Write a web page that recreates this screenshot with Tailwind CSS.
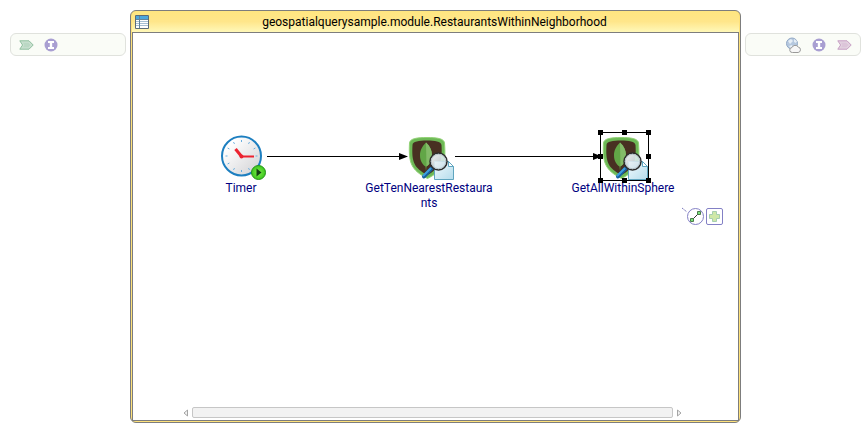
<!DOCTYPE html>
<html lang="en">
<head>
    <meta charset="UTF-8">
    <meta name="viewport" content="width=device-width, initial-scale=1.0">
    <title>RestaurantsWithinNeighborhood</title>
    <script src="https://cdn.jsdelivr.net/npm/@tailwindcss/browser@4"></script>
</head>
<body class="bg-white font-['Roboto','Open_Sans',sans-serif] text-xs text-black">
    <!-- Shared icons -->
    <svg class="absolute h-0 w-0">
        <defs>
            <linearGradient id="face" x1="0" y1="0" x2="1" y2="1">
                <stop offset="0.2" stop-color="#ffffff"/>
                <stop offset="1" stop-color="#cfcfd2"/>
            </linearGradient>
            <radialGradient id="play">
                <stop offset="0" stop-color="#7df04c"/>
                <stop offset="1" stop-color="#3cc51c"/>
            </radialGradient>
            <linearGradient id="paper" x1="0" y1="0" x2="1" y2="1">
                <stop offset="0" stop-color="#f2fafd"/>
                <stop offset="1" stop-color="#b5dcec"/>
            </linearGradient>
            <linearGradient id="lens" x1="0" y1="0" x2="1" y2="1">
                <stop offset="0" stop-color="#ffffff" stop-opacity="0.95"/>
                <stop offset="1" stop-color="#c3dbe6" stop-opacity="0.8"/>
            </linearGradient>
        </defs>
        <symbol id="icon-interface" viewBox="0 0 14 14">
            <circle cx="7" cy="7" r="6.5" fill="#a99fd2"/>
            <path d="M4 3h6v2H8.200v4H10v2H4V9h1.800V5H4z" fill="#ffffff"/>
        </symbol>
        <symbol id="icon-arrow" viewBox="0 0 15 10">
            <path d="M.8.8h9.200L14.200 5 10 9.200H.8L3.600 5z" fill="currentColor" fill-opacity="0.45" stroke="currentColor"/>
            <path d="M4 2.800h5.200L11.400 5 9.200 7.200H4L5.400 5z" fill="currentColor" fill-opacity="0.25"/>
        </symbol>
        <symbol id="icon-query" viewBox="-4 0 50 46">
            <path d="M1.500 8C2 3.500 9 2.500 19 2.500S36 3.500 36.500 8C38 28 36 35 19.500 43.500 3 35 .5 28 1.500 8z" fill="#6db956" stroke="#93d277"/>
            <path d="M4.500 10C4.500 6.500 11 5.500 19 5.500S33 6.500 33.500 10C34.500 27 32 33 19.500 40 6 33 3.500 27 4.500 10z" fill="#483022"/>
            <path d="M18 7.500C13.500 12 12 16 12 20.500 12 26 14.500 29.500 17.500 31.500L18 36 18.500 31.500C22 29 24 26 24 20 24 16 22 11 18 7.500z" fill="#62a647"/>
            <path d="M18 7.500C22 11 24 16 24 20 24 26 22 29 18.500 31.500z" fill="#83bb68"/>
            <path d="M26.500 26.500H40.500L45.500 31.500V44.500H26.500z" fill="url(#paper)" stroke="#5fa5bf"/>
            <path d="M40.500 26.500V31.500H45.500z" fill="#ffffff" stroke="#5fa5bf"/>
            <path d="M24 33L16 41.500" stroke="#17609f" stroke-width="4" stroke-linecap="round"/>
            <path d="M22.500 33.500L15.500 40.500" stroke="#3f9ddd" stroke-width="2" stroke-linecap="round"/>
            <circle cx="30.500" cy="26.500" r="8.500" fill="url(#lens)" stroke="#2c2c2c" stroke-width="1.500"/>
            <circle cx="30.500" cy="26.500" r="7.200" fill="none" stroke="#b4c1c7"/>
        </symbol>
    </svg>

    <main class="flex h-screen gap-1 pt-[10px] pr-[2px] pb-[11px] pl-[10px]">
        <!-- Promoted services -->
        <aside class="mt-[23px] flex h-[23px] w-[116px] items-center gap-2.5 rounded-md border border-[#e0e2dd] bg-[#fafcf7] px-[8px]">
            <svg class="h-[10px] w-[15px] text-[#8fbf9f]"><use href="#icon-arrow"/></svg>
            <svg class="h-[14px] w-[14px]"><use href="#icon-interface"/></svg>
        </aside>

        <!-- Composite -->
        <section class="flex flex-1 flex-col rounded-md border border-[#7d7d7d] bg-[#ffe27a] px-px pb-px">
            <header class="relative flex h-[21px] items-center justify-center rounded-t-md bg-linear-to-b from-[#ffe680] via-[#ffe68a] to-[#fff8b8] pr-[2px]">
                <svg class="absolute left-[3px] top-[4px] h-[14px] w-[14px]" viewBox="0 0 14 14">
                    <path d="M.5.5h13v13H.5z" fill="#ffffff" stroke="#5b6b78"/>
                    <path d="M1 1h12v3H1z" fill="#4da6dc"/>
                    <path d="M1 6.500h12M1 8.500h12M1 10.500h12" stroke="#a6bfd2"/>
                    <path d="M4.500 1v12M1 4.500h12" stroke="#63849c"/>
                </svg>
                <h1>geospatialquerysample.module.RestaurantsWithinNeighborhood</h1>
            </header>

            <div class="relative flex flex-1 flex-col border border-[#7d7d7d] bg-white text-[#000080]">
                <!-- Wires -->
                <svg class="absolute left-0 top-0 h-full w-full">
                    <path d="M134 123.500h134M322 123.500h140" stroke="#000000"/>
                    <path d="M266 120l9 3.500-9 3.500zM460 120l9 3.500-9 3.500z" fill="#000000"/>
                </svg>

                <!-- Timer -->
                <figure class="absolute left-[46px] top-[102px] flex w-[124px] flex-col items-center">
                    <svg class="h-[46px] w-[50px]" viewBox="-3 0 50 46">
                        <circle cx="22.500" cy="21" r="19.500" fill="url(#face)" stroke="#1d7fc0" stroke-width="2"/>
                        <g stroke="#6aaede" transform="translate(-.5 0)">
                            <path d="M23 5v2M23 35v2M7 21h2M37 21h2"/>
                            <path d="M15 7.100l1 1.800M31 7.100l-1 1.800M9.100 13l1.800 1M36.900 13l-1.800 1M9.100 29l1.800-1M15 34.900l1-1.800M31 34.900l-1-1.800"/>
                        </g>
                        <path d="M23 22L16.500 14" stroke="#ec2330" stroke-width="3"/>
                        <path d="M22 21.500h13" stroke="#ec2330" stroke-width="2"/>
                        <circle cx="22.500" cy="21.500" r="2" fill="#ec2330"/>
                        <circle cx="39.500" cy="37.500" r="7" fill="url(#play)" stroke="#239318"/>
                        <path d="M37.500 33.500l5 4-5 4z" fill="#123f12"/>
                    </svg>
                    <figcaption class="text-center leading-[15px]">Timer</figcaption>
                </figure>

                <!-- GetTenNearestRestaurants -->
                <figure class="absolute left-[234px] top-[102px] flex w-[124px] flex-col items-center">
                    <svg class="h-[46px] w-[50px]"><use href="#icon-query"/></svg>
                    <figcaption class="text-center leading-[15px]">GetTenNearestRestaura<br>nts</figcaption>
                </figure>

                <!-- GetAllWithinSphere -->
                <figure class="absolute left-[428px] top-[102px] flex w-[124px] flex-col items-center">
                    <svg class="h-[46px] w-[50px]"><use href="#icon-query"/></svg>
                    <figcaption class="text-center leading-[15px]">GetAllWithinSphere</figcaption>
                </figure>
                <svg class="absolute left-[464px] top-[96px] h-[55px] w-[55px]" viewBox="0 0 55 55">
                    <path d="M3.500 3.500h48v48h-48z" fill="none" stroke="#000000"/>
                    <path d="M1 1h5v5H1zM25 1h5v5h-5zM49 1h5v5h-5zM1 25h5v5H1zM49 25h5v5h-5zM1 49h5v5H1zM25 49h5v5h-5zM49 49h5v5h-5z" fill="#000000"/>
                </svg>

                <!-- Context buttons -->
                <div class="absolute left-[548px] top-[174px] flex items-end gap-px">
                    <button type="button" aria-label="Connect">
                        <svg class="block h-[19px] w-[23px]" viewBox="0 0 23 19">
                            <path d="M1 1l5 4" stroke="#7b78bd" stroke-dasharray="2 1"/>
                            <circle cx="14.500" cy="9.500" r="8" fill="#ffffff" stroke="#8380c5"/>
                            <path d="M11 13l7-7" stroke="#333333"/>
                            <path d="M9.500 11.500h3v3h-3zM16.500 4.500h3v3h-3z" fill="#7be37b" stroke="#4c7b4c"/>
                        </svg>
                    </button>
                    <button type="button" aria-label="Add">
                        <svg class="block h-[18px] w-[18px]" viewBox="0 0 18 18">
                            <rect x="1.500" y=".5" width="16" height="16" rx="1.500" fill="#ffffff" stroke="#8380c5"/>
                            <path d="M7.500 3.500h4v3h3v4h-3v3h-4v-3h-3v-4h3z" fill="#cfe8a8" stroke="#a5cfb0"/>
                        </svg>
                    </button>
                </div>

                <!-- Scrollbar -->
                <div class="mt-auto mb-[2px] flex items-center gap-1 pr-14 pl-[50px]">
                    <svg class="h-[8px] w-[5px]" viewBox="0 0 5 8"><path d="M4.500 1v6L1 4z" fill="#f3f3f3" stroke="#a5a5a5"/></svg>
                    <div class="h-[11px] flex-1 rounded-xs border border-[#c6c6c6] bg-[#f2f2f2]"></div>
                    <svg class="h-[8px] w-[5px]" viewBox="0 0 5 8"><path d="M.5 1v6L4 4z" fill="#f3f3f3" stroke="#a5a5a5"/></svg>
                </div>
            </div>
        </section>

        <!-- Promoted references -->
        <aside class="mt-[23px] flex h-[23px] w-[116px] items-center justify-end gap-[11px] rounded-md border border-[#e0e2dd] bg-[#fafcf7] px-[8px]">
            <svg class="h-[16px] w-[15px]" viewBox="0 0 15 16">
                <circle cx="6" cy="6.500" r="5.500" fill="#b5c8df" stroke="#93a9c6"/>
                <path d="M2 4l3-2 2 2-3 3zM8 2l3 2-1 2-2-1zM3 9l3-1 1 3-2 1z" fill="#e6eef6"/>
                <path d="M6.500 15.500a2.500 2.500 0 0 1-.5-5 3.500 3.500 0 0 1 6.200-.5 2.800 2.800 0 0 1 0 5.500z" fill="#f7f7f7" stroke="#999999"/>
            </svg>
            <svg class="h-[14px] w-[14px]"><use href="#icon-interface"/></svg>
            <svg class="h-[10px] w-[15px] text-[#c79fc4]"><use href="#icon-arrow"/></svg>
        </aside>
    </main>
</body>
</html>
